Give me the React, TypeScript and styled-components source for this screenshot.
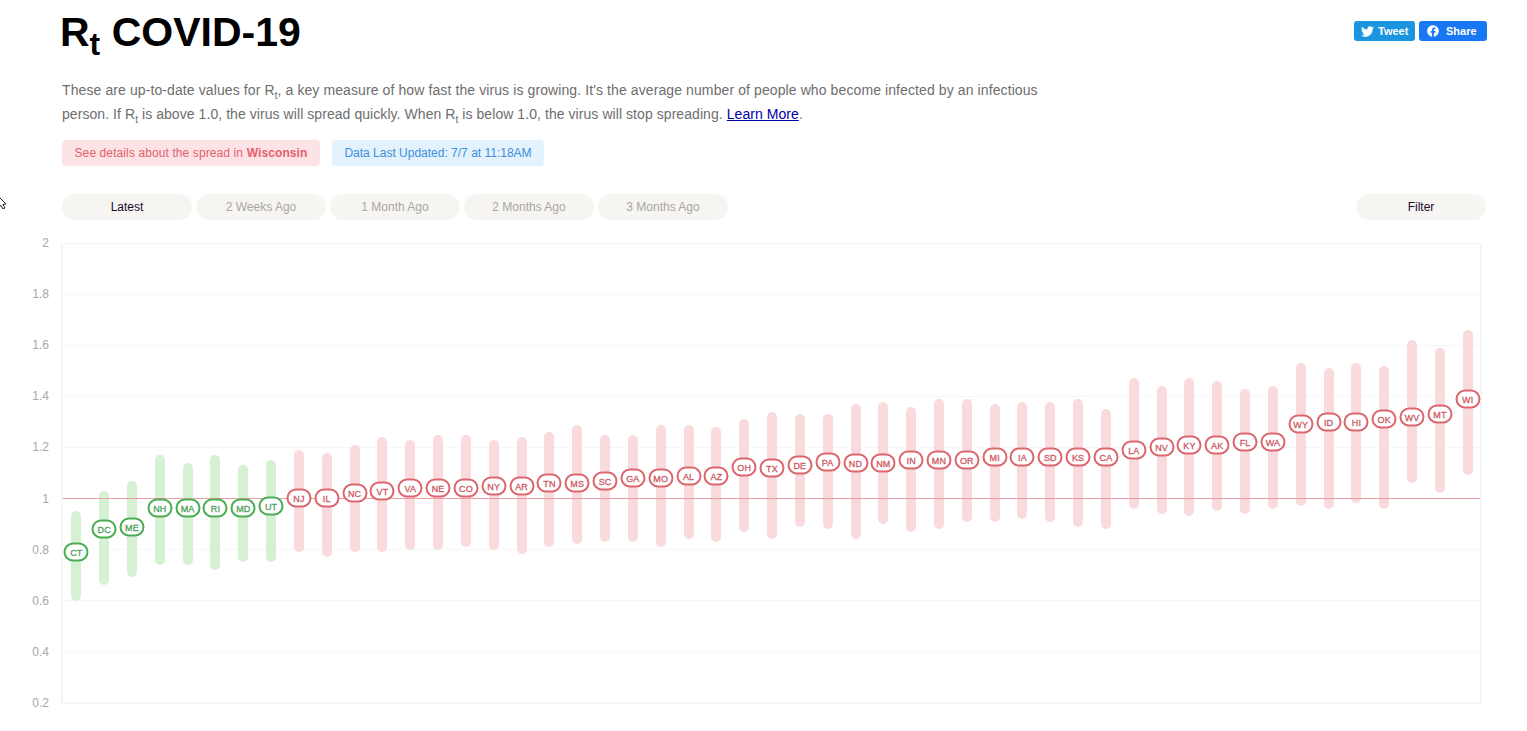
import React from 'react';
import styled, { createGlobalStyle } from 'styled-components';
import { FaFacebook, FaTwitter } from 'react-icons/fa';

// [state, bar top, bar bottom, label centre], measured on the page's y axis
type Row = [string, number, number, number];

const PLOT_TOP = 243;

const rows: Row[] = [
  ['CT', 511, 601, 552], ['DC', 491, 585, 529], ['ME', 481, 577, 527], ['NH', 455, 565, 508],
  ['MA', 463, 565, 508], ['RI', 455, 570, 508], ['MD', 465, 562, 508], ['UT', 460, 562, 506],
  ['NJ', 450, 552, 498], ['IL', 453, 557, 498], ['NC', 445, 552, 493], ['VT', 437, 552, 491],
  ['VA', 440, 550, 488], ['NE', 435, 550, 488], ['CO', 435, 547, 488], ['NY', 440, 550, 486],
  ['AR', 437, 554, 486], ['TN', 432, 547, 483], ['MS', 425, 544, 483], ['SC', 435, 542, 481],
  ['GA', 435, 542, 478], ['MO', 425, 547, 478], ['AL', 425, 539, 476], ['AZ', 427, 542, 476],
  ['OH', 419, 532, 467], ['TX', 412, 539, 468], ['DE', 414, 527, 465], ['PA', 414, 529, 462],
  ['ND', 404, 539, 463], ['NM', 402, 524, 463], ['IN', 407, 532, 460], ['MN', 399, 529, 460],
  ['OR', 399, 522, 460], ['MI', 404, 522, 457], ['IA', 402, 519, 457], ['SD', 402, 522, 457],
  ['KS', 399, 527, 457], ['CA', 409, 529, 457], ['LA', 378, 509, 450], ['NV', 386, 514, 447],
  ['KY', 378, 516, 445], ['AK', 381, 511, 445], ['FL', 389, 514, 442], ['WA', 386, 509, 442],
  ['WY', 363, 506, 424], ['ID', 368, 509, 422], ['HI', 363, 503, 422], ['OK', 366, 509, 419],
  ['WV', 340, 483, 417], ['MT', 348, 493, 414], ['WI', 330, 475, 399],
];

const GREEN_STATES = 8;
const ticks = ['2', '1.8', '1.6', '1.4', '1.2', '1', '0.8', '0.6', '0.4', '0.2'];
const periods = ['Latest', '2 Weeks Ago', '1 Month Ago', '2 Months Ago', '3 Months Ago'];

const Rt = () => (
  <>
    R<sub>t</sub>
  </>
);

const App: React.FC = () => {
  return (
    <Page>
      <GlobalStyle />
      <Cursor viewBox="0 0 8 14">
        <path d="M-3 0 L6 9 L3 9.5 L5 13 L3 14 L1 10.5 L-3 13 Z" fill="#fff" stroke="#222" strokeWidth="1" />
      </Cursor>
      <Header>
        <Title>
          <Rt /> COVID-19
        </Title>
        <Social>
          <ShareButton $bg="#1b95e0" $width={61} $inset={7} $gap={4}>
            <FaTwitter size={13} />
            Tweet
          </ShareButton>
          <ShareButton $bg="#1877f2" $width={68} $inset={8} $gap={7}>
            <FaFacebook size={12} />
            Share
          </ShareButton>
        </Social>
      </Header>
      <Intro>
        <IntroLine $tracking={0.1}>
          These are up-to-date values for <Rt />, a key measure of how fast the virus is growing. It's the average
          number of people who become infected by an infectious
        </IntroLine>
        <IntroLine $tracking={0.065}>
          person. If <Rt /> is above 1.0, the virus will spread quickly. When <Rt /> is below 1.0, the virus will stop
          spreading. <a href="#learn">Learn More</a>.
        </IntroLine>
      </Intro>
      <Notices>
        <Notice $bg="#fde3e5" $color="#e2626e" $width={258} $tracking={0.1}>
          See details about the spread in <b>Wisconsin</b>
        </Notice>
        <Notice $bg="#e3f2fd" $color="#3b8fdc" $width={212}>
          Data Last Updated: 7/7 at 11:18AM
        </Notice>
      </Notices>
      <Controls>
        <Periods>
          {periods.map((label, index) => (
            <Pill key={label} $active={index === 0}>
              {label}
            </Pill>
          ))}
        </Periods>
        <Pill $active>Filter</Pill>
      </Controls>
      <Chart>
        <Axis>
          {ticks.map((tick) => (
            <Tick key={tick}>{tick}</Tick>
          ))}
        </Axis>
        <Plot>
          <GridLines>
            {ticks.slice(1, -1).map((tick) => (
              <GridLine key={tick} />
            ))}
          </GridLines>
          <Columns>
            {rows.map(([state, top, bottom], index) => (
              <Column key={state}>
                <Bar $good={index < GREEN_STATES} style={{ top: top - PLOT_TOP, height: bottom - top }} />
              </Column>
            ))}
          </Columns>
          <OneLine />
          <Columns>
            {rows.map(([state, , , mid], index) => (
              <Column key={state}>
                <Label $good={index < GREEN_STATES} style={{ top: mid - PLOT_TOP }}>
                  {state}
                </Label>
              </Column>
            ))}
          </Columns>
        </Plot>
      </Chart>
    </Page>
  );
};

export default App;

const GlobalStyle = createGlobalStyle`
  body {
    margin: 0;
    background: #fff;
    font-family: "Liberation Sans", Arial, sans-serif;
  }
`;

const Page = styled.div`
  position: relative;
  height: 731px;
  overflow: hidden;
`;

const Cursor = styled.svg`
  position: absolute;
  left: 0;
  top: 195px;
  width: 8px;
  height: 14px;
`;

const Header = styled.header`
  display: flex;
  justify-content: space-between;
  padding: 0 40px 0 60px;
  height: 78px;
`;

const Title = styled.h1`
  margin: 0;
  padding-top: 9px;
  font-size: 41px;
  line-height: 46px;
  font-weight: 700;
  color: #000;

  sub {
    font-size: 32px;
    line-height: 0;
  }
`;

const Social = styled.div`
  display: flex;
  gap: 4px;
  padding-top: 21px;
`;

const ShareButton = styled.div<{ $bg: string; $width: number; $inset: number; $gap: number }>`
  box-sizing: border-box;
  display: flex;
  align-items: center;
  gap: ${(p) => p.$gap}px;
  width: ${(p) => p.$width}px;
  height: 20px;
  padding-left: ${(p) => p.$inset}px;
  border-radius: 3px;
  background: ${(p) => p.$bg};
  color: #fff;
  font-size: 11px;
  font-weight: 700;
`;

const Intro = styled.div`
  margin-left: 62px;
  color: #6e6e6e;
  font-size: 14px;
  line-height: 24px;

  sub {
    font-size: 10px;
    line-height: 0;
  }

  a {
    color: #0000a8;
  }
`;

const IntroLine = styled.p<{ $tracking: number }>`
  margin: 0;
  white-space: nowrap;
  letter-spacing: ${(p) => p.$tracking}px;
`;

const Notices = styled.div`
  display: flex;
  gap: 12px;
  margin: 14px 0 0 62px;
`;

const Notice = styled.div<{ $bg: string; $color: string; $width: number; $tracking?: number }>`
  display: flex;
  align-items: center;
  justify-content: center;
  gap: 0.3em;
  width: ${(p) => p.$width}px;
  height: 26px;
  border-radius: 4px;
  background: ${(p) => p.$bg};
  color: ${(p) => p.$color};
  font-size: 12px;
  letter-spacing: ${(p) => p.$tracking ?? 0}px;
`;

const Controls = styled.div`
  display: flex;
  justify-content: space-between;
  margin: 28px 41px 0 62px;
`;

const Periods = styled.div`
  display: flex;
  gap: 4px;
`;

const Pill = styled.div<{ $active?: boolean }>`
  display: flex;
  align-items: center;
  justify-content: center;
  width: 130px;
  height: 26px;
  border-radius: 13px;
  background: #f6f5f2;
  color: ${(p) => (p.$active ? '#1c0c2c' : '#aaa6a6')};
  font-size: 12px;
`;

const Chart = styled.section`
  display: flex;
  margin-top: 23px;
  padding-right: 45px;
`;

const Axis = styled.div`
  display: flex;
  flex-direction: column;
  justify-content: space-between;
  align-items: flex-end;
  width: 49px;
  height: 460px;
  margin-right: 12px;
`;

const Tick = styled.span`
  height: 0;
  line-height: 0;
  color: #aaa6a6;
  font-size: 12px;
`;

const Plot = styled.div`
  position: relative;
  box-sizing: border-box;
  flex: 1;
  height: 461px;
  border: 2px solid #f5f5f5;
  border-width: 1px 2px 2px 2px;
`;

const GridLines = styled.div`
  position: absolute;
  inset: 0;
  display: flex;
  flex-direction: column;
  justify-content: space-evenly;
`;

const GridLine = styled.div`
  height: 1px;
  background: #f6f6f6;
`;

const OneLine = styled.div`
  position: absolute;
  left: 0;
  right: 0;
  top: 254px;
  height: 1px;
  background: #eb9da0;
`;

const Columns = styled.div`
  position: absolute;
  inset: -1px 0 0 -0.7px;
  display: flex;
`;

const Column = styled.div`
  position: relative;
  flex: 0 0 27.83px;
`;

const Bar = styled.div<{ $good: boolean }>`
  position: absolute;
  left: 9px;
  width: 10px;
  border-radius: 5px;
  background: ${(p) => (p.$good ? '#d6f0d4' : '#f9dbdd')};
`;

const Label = styled.div<{ $good: boolean }>`
  position: absolute;
  left: 14px;
  transform: translate(-50%, -50%);
  box-sizing: border-box;
  display: flex;
  align-items: center;
  justify-content: center;
  width: 25px;
  height: 19px;
  border: 2px solid ${(p) => (p.$good ? '#4aad52' : '#dc666d')};
  border-radius: 9.5px;
  background: #fff;
  color: ${(p) => (p.$good ? '#4ea25a' : '#cd5a64')};
  font-size: 9px;
  letter-spacing: 0.15px;
  -webkit-text-stroke: 0.3px currentColor;
`;
